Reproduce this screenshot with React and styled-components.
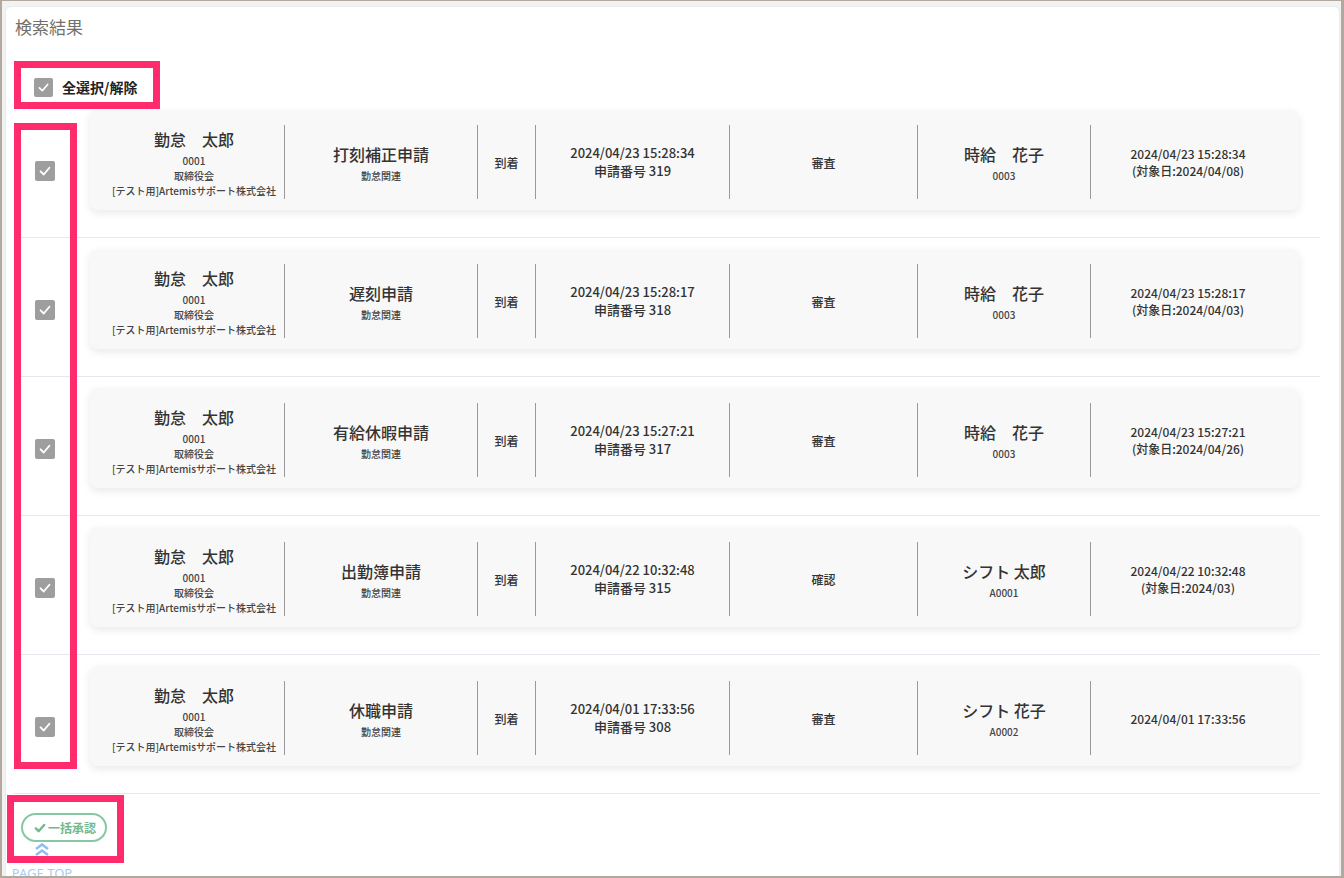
import React from "react";
import styled, { createGlobalStyle } from "styled-components";

const GlobalStyle = createGlobalStyle`
  html, body {
    margin: 0;
    padding: 0;
    background: #f2f2f2;
    overflow: hidden;
  }
  body {
    font-family: "Noto Sans CJK JP", "Noto Sans", sans-serif;
    color: #333;
  }
  * {
    box-sizing: border-box;
  }
`;

const Frame = styled.div`
  position: relative;
  width: 1344px;
  height: 878px;
  border-style: solid;
  border-color: #b1a8a0;
  border-width: 1px 3px 2px 2px;
  background: #f2f2f2;
  overflow: hidden;
`;

const Panel = styled.div`
  margin: 5px 1px 0 3px;
  min-height: 900px;
  background: #fff;
  border: 1px solid #ebebeb;
  border-radius: 6px;
`;

const Title = styled.h2`
  margin: 0;
  padding: 8px 0 0 9px;
  font-size: 17px;
  line-height: 24px;
  font-weight: 400;
  color: #72706d;
`;

const SelectAll = styled.label`
  display: flex;
  align-items: center;
  gap: 9px;
  margin: 38px 0 2px 28px;
  height: 20px;
  font-size: 14px;
  font-weight: 700;
  color: #222;
`;

const Box = styled.span`
  display: inline-flex;
  align-items: center;
  justify-content: center;
  width: ${(p) => p.$size}px;
  height: ${(p) => p.$size}px;
  border-radius: 2px;
  background: #9e9e9e;
  flex-shrink: 0;
`;

const List = styled.div`
  margin-left: 8px;
  width: 1306px;
`;

const Row = styled.div`
  display: grid;
  grid-template-columns: 62px 1209px;
  column-gap: 14px;
  padding: 11px 21px 27px 0;
  border-bottom: 1px solid #e7e7f0;
`;

const CheckCell = styled.div`
  display: flex;
  align-items: center;
  justify-content: center;
  padding-top: 22px;
`;

const Card = styled.div`
  display: grid;
  grid-template-columns: 180px 193px 58px 194px 188px 173px 195px;
  height: 100px;
  padding: 15px 14px 11px;
  background: #f8f8f8;
  border-radius: 8px;
  box-shadow: 0 3px 8px rgba(0, 0, 0, 0.09);
`;

const Col = styled.div`
  display: flex;
  flex-direction: column;
  align-items: center;
  justify-content: center;
  height: 74px;
  text-align: center;
  border-left: ${(p) => (p.$first ? "none" : "1px solid #9a9a9a")};
`;

const Big = styled.div`
  font-size: 16px;
  line-height: 24px;
  font-weight: 500;
  color: #333;
  white-space: pre;
  margin-bottom: 2px;
`;

const Small = styled.div`
  font-size: 10px;
  line-height: 15px;
  font-weight: 500;
  color: #444;
  white-space: nowrap;
`;

const Mid = styled.div`
  font-size: ${(p) => p.$size || 12}px;
  line-height: ${(p) => (p.$size === 13 ? 18 : 17)}px;
  font-weight: 500;
  color: #333;
  white-space: nowrap;
`;

const Footer = styled.div`
  padding: 19px 0 0 15px;
`;

const BulkButton = styled.button`
  display: inline-flex;
  align-items: center;
  gap: 2px;
  width: 86px;
  height: 29px;
  padding: 0 0 0 11px;
  border: 2px solid #86c8a2;
  border-radius: 15px;
  background: #fff;
  color: #72b88d;
  font-family: inherit;
  font-size: 12px;
  font-weight: 700;
`;

const Mark = styled.div`
  position: absolute;
  left: ${(p) => p.$x}px;
  top: ${(p) => p.$y}px;
  width: ${(p) => p.$w}px;
  height: ${(p) => p.$h}px;
  border: 7px solid #ff2b6c;
  pointer-events: none;
`;

const PageTop = styled.a`
  position: absolute;
  left: 10px;
  top: 842px;
  width: 60px;
  display: flex;
  flex-direction: column;
  align-items: center;
  gap: 9px;
  color: #a8ccef;
  font-size: 13px;
  line-height: 16px;
  text-decoration: none;
  font-family: "Noto Sans", sans-serif;
  white-space: nowrap;
`;

const Tick = ({ size = 12 }) => (
  <svg width={size} height={size} viewBox="0 0 12 12">
    <polyline
      points="2.2,6.3 4.9,9 9.8,3.2"
      fill="none"
      stroke="#fff"
      strokeWidth="1.6"
      strokeLinecap="round"
      strokeLinejoin="round"
    />
  </svg>
);

const Checkbox = ({ size }) => (
  <Box $size={size}>
    <Tick size={size - 6} />
  </Box>
);

const rows = [
  {
    type: "打刻補正申請",
    date: "2024/04/23 15:28:34",
    no: "319",
    step: "審査",
    approver: "時給　花子",
    code: "0003",
    target: "(対象日:2024/04/08)",
  },
  {
    type: "遅刻申請",
    date: "2024/04/23 15:28:17",
    no: "318",
    step: "審査",
    approver: "時給　花子",
    code: "0003",
    target: "(対象日:2024/04/03)",
  },
  {
    type: "有給休暇申請",
    date: "2024/04/23 15:27:21",
    no: "317",
    step: "審査",
    approver: "時給　花子",
    code: "0003",
    target: "(対象日:2024/04/26)",
  },
  {
    type: "出勤簿申請",
    date: "2024/04/22 10:32:48",
    no: "315",
    step: "確認",
    approver: "シフト 太郎",
    code: "A0001",
    target: "(対象日:2024/03)",
  },
  {
    type: "休職申請",
    date: "2024/04/01 17:33:56",
    no: "308",
    step: "審査",
    approver: "シフト 花子",
    code: "A0002",
    target: null,
  },
];

const App = () => {
  return (
    <>
      <GlobalStyle />
      <Frame>
        <Panel>
          <Title>検索結果</Title>
          <SelectAll>
            <Checkbox size={19} />
            全選択/解除
          </SelectAll>
          <List>
            {rows.map((r) => (
              <Row key={r.no}>
                <CheckCell>
                  <Checkbox size={20} />
                </CheckCell>
                <Card>
                  <Col $first>
                    <Big>勤怠　太郎</Big>
                    <Small>0001</Small>
                    <Small>取締役会</Small>
                    <Small>[テスト用]Artemisサポート株式会社</Small>
                  </Col>
                  <Col>
                    <Big>{r.type}</Big>
                    <Small>勤怠関連</Small>
                  </Col>
                  <Col>
                    <Mid>到着</Mid>
                  </Col>
                  <Col>
                    <Mid $size={13}>{r.date}</Mid>
                    <Mid $size={13}>申請番号 {r.no}</Mid>
                  </Col>
                  <Col>
                    <Mid>{r.step}</Mid>
                  </Col>
                  <Col>
                    <Big>{r.approver}</Big>
                    <Small>{r.code}</Small>
                  </Col>
                  <Col>
                    <Mid>{r.date}</Mid>
                    {r.target && <Mid>{r.target}</Mid>}
                  </Col>
                </Card>
              </Row>
            ))}
          </List>
          <Footer>
            <BulkButton>
              <svg width="12" height="12" viewBox="0 0 12 12">
                <polyline
                  points="1.8,6.4 4.6,9.2 10.2,3"
                  fill="none"
                  stroke="#72b88d"
                  strokeWidth="2.4"
                  strokeLinecap="round"
                  strokeLinejoin="round"
                />
              </svg>
              一括承認
            </BulkButton>
          </Footer>
        </Panel>

        <Mark $x={12} $y={60} $w={146} $h={48} />
        <Mark $x={12} $y={122} $w={63} $h={646} />
        <Mark $x={5} $y={794} $w={117} $h={68} />

        <PageTop href="#">
          <svg width="16" height="13" viewBox="0 0 16 13">
            <polyline
              points="2,6 8,1.5 14,6"
              fill="none"
              stroke="#8fbef0"
              strokeWidth="2.6"
            />
            <polyline
              points="2,12 8,7.5 14,12"
              fill="none"
              stroke="#8fbef0"
              strokeWidth="2.6"
            />
          </svg>
          PAGE TOP
        </PageTop>
      </Frame>
    </>
  );
};

export default App;
